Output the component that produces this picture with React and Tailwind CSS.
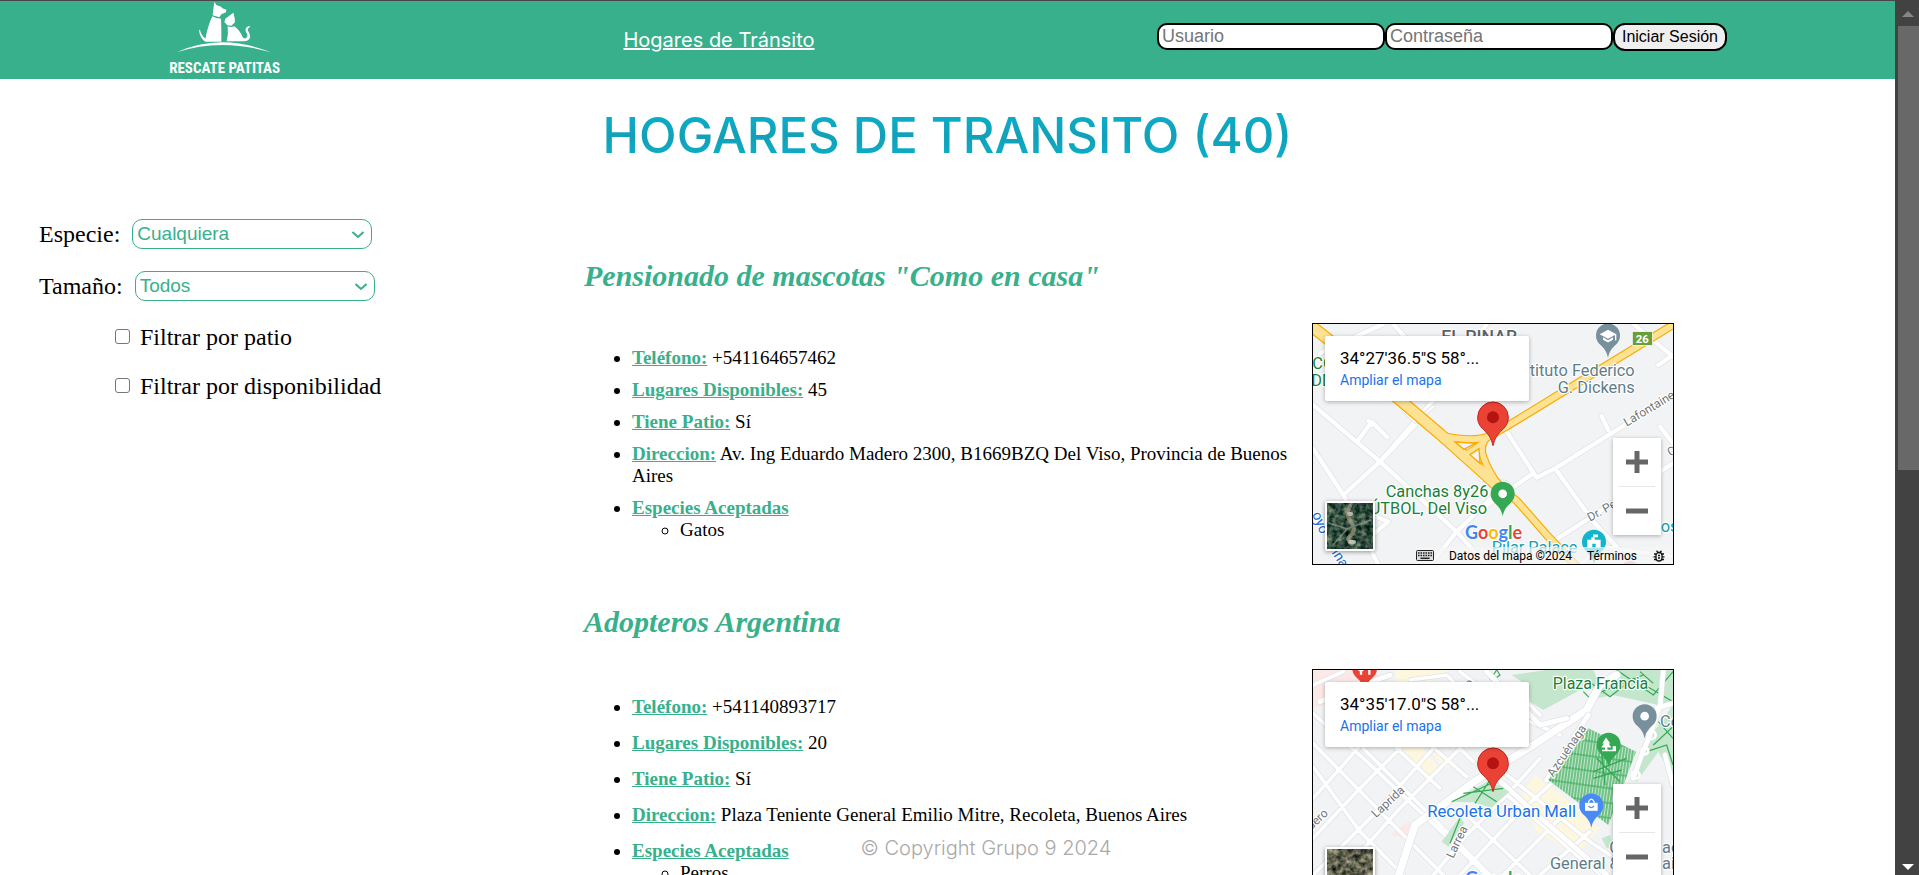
import React from "react";

const serif = "font-['Liberation_Serif',serif]";
const sans = "font-['Liberation_Sans',sans-serif]";
const inter = "font-['Inter',sans-serif]";

function Logo() {
  return (
    <svg viewBox="24 3 339 234" className="h-[78px] w-[113px] shrink-0" role="img" aria-label="Rescate Patitas">
      <g fill="#fff">
        <path d="M163 5l6 10 14 5 4 5 12 4-1 8-14 6-6 9-20-6 2-18z" />
        <path d="M157 49q12 7 26 7l1 32v37h-48q-16-9-19-34l3-2q2 14 16 27 8-40 21-67z" />
        <path d="M220 38l4 17 1 12-11 10-12-1-9-10 3-10 11-8z" />
        <path d="M203 79q10 4 20 0 17 12 25 33 4 4 9 3 9-5 3-15-10-16 8-23l2 4q-11 6-4 15 9 16-1 24-5 4-13 4h-52q6-22 3-45z" />
        <path d="M50 157Q182 97 333 157 184 113 50 157z" />
      </g>
      <text x="194" y="218" textAnchor="middle" fill="#fff" fontSize="45" fontWeight="700" fontFamily="'Liberation Sans Narrow', 'Roboto Condensed', 'Roboto', sans-serif">
        RESCATE PATITAS
      </text>
    </svg>
  );
}

function Header() {
  return (
    <header className="flex h-[79px] items-center justify-between border-t border-[#474747] bg-[#38b08c] px-[168px]">
      <Logo />
      <nav>
        <a href="#hogares" className={`${inter} text-[20px] leading-6 text-white underline`}>
          Hogares de Tránsito
        </a>
      </nav>
      <form className={`${sans} flex items-start pb-1.5`} onSubmit={(e) => e.preventDefault()}>
        <input
          type="text"
          aria-label="Usuario"
          placeholder="Usuario"
          className="h-[27px] w-[228px] rounded-[10px] border-2 border-black bg-white px-[3px] text-[18px] placeholder:text-[#757575]"
        />
        <input
          type="password"
          aria-label="Contraseña"
          placeholder="Contraseña"
          className="h-[27px] w-[228px] rounded-[10px] border-2 border-black bg-white px-[3px] text-[18px] placeholder:text-[#757575]"
        />
        <button type="submit" className="h-[28px] w-[114px] rounded-[12px] border-2 border-black bg-[#efefef] text-[16px] leading-6 text-black">
          Iniciar Sesión
        </button>
      </form>
    </header>
  );
}

function SelectField({ id, label, options }) {
  return (
    <div className="flex h-[30px] items-center gap-3">
      <label htmlFor={id} className="text-[24px]">{label}</label>
      <span className="relative flex">
        <select
          id={id}
          className={`${sans} h-[30px] w-[240px] appearance-none rounded-[10px] border border-[#38b08c] bg-white pl-1 text-[19px] text-[#38b08c]`}
        >
          {options.map((o) => (
            <option key={o}>{o}</option>
          ))}
        </select>
        <svg viewBox="0 0 12 8" className="pointer-events-none absolute top-3 right-2 h-2 w-3">
          <path d="M0.500 1l5.500 5 5.500-5" fill="none" stroke="#38b08c" strokeWidth="2" />
        </svg>
      </span>
    </div>
  );
}

function CheckField({ id, label }) {
  return (
    <div className="flex h-[27px] items-center gap-2.5 pl-[76px]">
      <input
        id={id}
        type="checkbox"
        className="size-[15px] appearance-none rounded-[3px] border border-[#767676] bg-white checked:bg-[#38b08c]"
      />
      <label htmlFor={id} className="text-[24px]">{label}</label>
    </div>
  );
}

function Filters() {
  return (
    <aside className={`${serif} flex w-[584px] shrink-0 flex-col gap-[22px] pt-[53px] pl-[39px] text-black`}>
      <SelectField id="especie" label="Especie:" options={["Cualquiera", "Perros", "Gatos"]} />
      <SelectField id="tamano" label="Tamaño:" options={["Todos", "Chico", "Mediano", "Grande"]} />
      <CheckField id="patio" label="Filtrar por patio" />
      <CheckField id="disponibilidad" label="Filtrar por disponibilidad" />
    </aside>
  );
}

function Pin({ x, y, r, fill, stroke = "none", children }) {
  const h = r * 2.85;
  return (
    <g transform={`translate(${x} ${y})`}>
      <path
        d={`M0 0C${-r * 0.12} ${-h * 0.18} ${-r * 0.3} ${-h * 0.26} ${-r * 0.6} ${-h * 0.36}C${-r * 0.9} ${-h * 0.46} ${-r} ${-h * 0.54} ${-r} ${-h + r}A${r} ${r} 0 0 1 ${r} ${-h + r}C${r} ${-h * 0.54} ${r * 0.9} ${-h * 0.46} ${r * 0.6} ${-h * 0.36}C${r * 0.3} ${-h * 0.26} ${r * 0.12} ${-h * 0.18} 0 0Z`}
        fill={fill}
        stroke={stroke}
        strokeWidth="3"
      />
      <g transform={`translate(0 ${-h + r})`}>{children}</g>
    </g>
  );
}

function Place({ x, y, fill, anchor = "start", size = 49, rotate = 0, children, weight = 400 }) {
  return (
    <text
      transform={`translate(${x} ${y}) rotate(${rotate})`}
      fill={fill}
      fontSize={size}
      fontWeight={weight}
      textAnchor={anchor}
      stroke="#fff"
      strokeWidth="7"
      strokeLinejoin="round"
      paintOrder="stroke"
    >
      {children}
    </text>
  );
}

function Streets({ d, width = 13, edge = "#dfe1e5" }) {
  return (
    <g fill="none" strokeLinecap="round" strokeLinejoin="round">
      <path d={d} stroke={edge} strokeWidth={width + 4} />
      <path d={d} stroke="#fff" strokeWidth={width} />
    </g>
  );
}

function MapDelViso() {
  const highway = "M30 45L100 100 300 270 420 372 530 470 600 535";
  const highwaySouth = "M590 525L650 572 745 680 840 780";
  const route = "M1140 32L880 190 622 348 570 378Q520 398 430 378";
  const ramp = "M575 372Q535 395 550 440 565 485 600 530";
  const ramp2 = "M495 435Q525 415 552 395";
  const all = [highwaySouth, route];
  return (
    <svg viewBox="39 42 1080 720" className="block size-full" fontFamily="Roboto, sans-serif" aria-hidden="true">
      <rect x="39" y="42" width="1080" height="720" fill="#f1f3f4" />
      <Streets d="M39 285L240 455 470 665 560 765M39 415L130 555 235 765M130 555L240 455 345 345M240 455L410 260 560 42M470 665L620 520 540 505M470 665L390 765M280 42L340 110M60 130L250 42M1000 42L1119 140M1075 165L1119 135M905 318L925 360M620 365L710 503 765 475 1119 255M765 475L880 635 950 710M700 490L540 600M1080 350L1119 400M750 700L860 630 1119 460M180 600L265 635 200 690M175 390L215 335 262 382M205 332L215 345M840 765L900 710 1119 740" />
      <Streets d="M310 300L345 335 400 290" width={8} />
      <g fill="none" strokeLinejoin="round">
        <path d={highway} stroke="#f9ab00" strokeWidth="37" />
        {all.map((d) => <path key={d} d={d} stroke="#f9ab00" strokeWidth="25" />)}
        <path d={ramp} stroke="#f9ab00" strokeWidth="24" />
        <path d={ramp2} stroke="#f9ab00" strokeWidth="20" />
        <path d={highway} stroke="#fde293" strokeWidth="30" />
        {all.map((d) => <path key={d} d={d} stroke="#fde293" strokeWidth="18" />)}
        <path d={ramp} stroke="#fde293" strokeWidth="17" />
        <path d={ramp2} stroke="#fde293" strokeWidth="14" />
      </g>
      <g fill="#f1f3f4" stroke="#f9ab00" strokeWidth="4">
        <path d="M465 396L526 400 492 418Z" />
        <path d="M510 434L537 416 540 460Z" />
      </g>
      <Place x={424} y={98} fill="#5f6368" weight={500} size={53}>EL PINAR</Place>
      <Place x={37} y={178} fill="#188038">CC</Place>
      <Place x={34} y={228} fill="#188038">DE</Place>
      <Place x={1004} y={198} fill="#607d8b" anchor="end">Instituto Federico</Place>
      <Place x={1004} y={248} fill="#607d8b" anchor="end">G. Dickens</Place>
      <Place x={980} y={350} fill="#70757a" size={36} rotate={-31}>Lafontaine</Place>
      <Place x={870} y={635} fill="#70757a" size={36} rotate={-29}>Dr. Pe</Place>
      <Place x={1112} y={440} fill="#70757a" size={36} rotate={-35}>C</Place>
      <Place x={565} y={560} fill="#188038" anchor="end">Canchas 8y26</Place>
      <Place x={561} y={611} fill="#188038" anchor="end">FÚTBOL, Del Viso</Place>
      <Place x={36} y={612} fill="#1967d2" size={42} rotate={68}>oyo</Place>
      <Place x={80} y={705} fill="#1967d2" size={42} rotate={58}>Pina</Place>
      <Place x={575} y={730} fill="#129eaf">Pilar Palace</Place>
      <Place x={1082} y={665} fill="#129eaf">os</Place>
      <rect x="997" y="65" width="60" height="41" fill="#689f38" stroke="#fff" strokeWidth="2" />
      <text x="1027" y="98" fill="#fff" fontSize="34" fontWeight="700" textAnchor="middle">26</text>
      <Pin x={924} y={143} r={36} fill="#78909c">
        <path d="M-25 -4L0 -17 25 -4 0 10zM-15 5v8l15 8 15-8V5L0 14z" fill="#fff" />
        <path d="M23 -4v19" stroke="#fff" strokeWidth="4" />
      </Pin>
      <Pin x={608} y={618} r={36} fill="#34a853"><circle r="13" fill="#fff" /></Pin>
      <Pin x={882} y={762} r={36} fill="#12b5cb">
        <path d="M-20 18V-6h12v-8h5v-8h15v8H2v8h18v24H5V6H-5v12z" fill="#fff" />
      </Pin>
      <circle cx="990" cy="780" r="28" fill="#f48fb1" />
      <Pin x={579} y={407} r={46} fill="#ea4335" stroke="#c5221f"><circle r="18" fill="#b31412" /></Pin>
    </svg>
  );
}

function MapRecoleta() {
  return (
    <svg viewBox="39 45 1080 720" className="block size-full" fontFamily="Roboto, sans-serif" aria-hidden="true">
      <defs>
        <pattern id="plots" width="9" height="44" patternUnits="userSpaceOnUse" patternTransform="rotate(8)">
          <path d="M3 0v44M0 3h9" stroke="#34a853" strokeWidth="3.5" />
        </pattern>
      </defs>
      <rect x="39" y="45" width="1080" height="720" fill="#f1f3f4" />
      <path d="M39 45H215L270 90 150 110 60 155H39Z" fill="#fce8e6" />
      <path d="M270 540L325 500 345 520 320 550Z" fill="#fce8e6" />
      <g fill="#fef7e0">
        <path d="M285 45H445L365 95 290 90Z" />
        <path d="M290 285L355 265 425 345 385 375Z" />
        <path d="M395 290L462 312 435 345Z" />
        <path d="M665 415L705 360 760 400 900 520 830 600 710 530Z" />
      </g>
      <g fill="#c3e6cd">
        <path d="M635 60L760 42 880 45 900 90 850 100 730 165 690 140 680 90Z" />
        <path d="M950 45H1119V140L1075 150 940 120 890 130 870 90 960 70Z" />
        <path d="M1040 260L1119 150V370L1075 290 1010 380 1000 370Z" />
        <path d="M905 550L930 540 940 580 920 580Z" />
      </g>
      <path
        d="M860 75L930 125 1000 70 1119 140M950 45L1060 120 1119 50M880 120L1030 60M1020 50L1060 85M1060 270L1119 215M1040 290L1100 270 1119 330M1075 200L1119 250M570 75L590 45 600 60 575 78M850 110L880 140"
        stroke="#34a853" strokeWidth="3.5" fill="none"
      />
      <Streets d="M39 265L330 560 430 660M39 175L190 310 430 535 560 660M39 335L180 530 310 660M190 280L500 590 570 660M290 280L420 400M500 480L690 660M380 260L500 365M480 280L520 320M575 380L830 600 905 660M615 355L870 560 930 600M39 550L180 400 300 280M39 660L230 470 400 280M120 660L300 460 480 280M39 430L130 330 180 270M400 660L500 540 620 420 720 310M480 660L640 490 760 380M610 660L800 470M720 660L870 530M330 75L440 60 470 90M480 50L600 140M640 100L720 180M690 200L780 240M39 90L130 50" width={11} />
      <Streets d="M290 680L345 510 530 375 700 270 860 165 900 90 950 60" width={22} />
      <Streets d="M570 350L700 470 920 660M740 375L865 180M60 140L270 60M560 50L720 210 800 190" width={15} />
      <g fill="#c3e6cd">
        <path d="M455 440L570 375 628 410 575 458 520 442Z" />
        <path d="M480 485L492 505 445 575 425 560Z" />
        <path d="M865 220L1008 290 925 510 745 375Z" />
      </g>
      <path d="M490 415L610 400M455 440L575 385M525 445L570 375M520 395L590 440M480 490L450 565" stroke="#34a853" strokeWidth="3.5" />
      <path d="M865 220L1008 290 925 510 745 375Z" fill="url(#plots)" />
      <path d="M880 350L980 310M890 310L960 380M905 290L915 390M880 370L965 345" stroke="#34a853" strokeWidth="4" />
      <Streets d="M1090 45L1080 155 1050 240 1025 300 1000 370M1119 145L1070 160M1095 300L1119 390" width={14} />
      <g fill="none" stroke="#fff" strokeWidth="8">
        <circle cx="1055" cy="240" r="12" />
        <circle cx="1035" cy="288" r="10" />
        <circle cx="1008" cy="360" r="11" />
      </g>
      <Place x={758} y={101} fill="#188038" size={48}>Plaza Francia</Place>
      <Place x={1080} y={217} fill="#607d8b">Ce</Place>
      <Place x={760} y={368} fill="#70757a" size={36} rotate={-56}>Azcuénaga</Place>
      <Place x={228} y={490} fill="#70757a" size={36} rotate={-43}>Laprida</Place>
      <Place x={34} y={526} fill="#70757a" size={36} rotate={-43}>uero</Place>
      <Place x={460} y={612} fill="#70757a" size={36} rotate={-65}>Larrea</Place>
      <Place x={508} y={100} fill="#70757a" size={36} rotate={-45}>o</Place>
      <Place x={828} y={485} fill="#1a73e8" anchor="end" size={50}>Recoleta Urban Mall</Place>
      <Place x={928} y={595} fill="#607d8b">C</Place>
      <Place x={1086} y={595} fill="#607d8b">ac</Place>
      <Place x={750} y={641} fill="#607d8b">General &amp;</Place>
      <Place x={1086} y={641} fill="#607d8b">ai</Place>
      <Pin x={194} y={108} r={37} fill="#ea4335">
        <path d="M-16 -12v20M-6 -12v20M14 -12v32M-11 0v20M-16 6h10" stroke="#fff" strokeWidth="7" />
      </Pin>
      <Pin x={1034} y={250} r={36} fill="#78909c"><circle r="13" fill="#fff" /></Pin>
      <Pin x={926} y={336} r={36} fill="#34a853">
        <path d="M-8 -22L5 -4H0L8 8H-4V15H22V19H-20V15H-11V8H-22L-14 -4H-19ZM12 4h10v11H12z" fill="#fff" />
      </Pin>
      <Pin x={874} y={518} r={36} fill="#4a8af4">
        <path d="M-19 -8H19V16H-19Z" fill="#fff" />
        <path d="M-8 -8v-4q8-14 16 0v4" stroke="#fff" strokeWidth="4" fill="none" />
        <path d="M-8 1q8 11 16 0" stroke="#4a8af4" strokeWidth="4" fill="none" />
      </Pin>
      <Pin x={579} y={410} r={46} fill="#ea4335" stroke="#c5221f"><circle r="18" fill="#b31412" /></Pin>
    </svg>
  );
}

function Satellite({ earthy }) {
  return (
    <svg viewBox="0 0 46 46" className="block size-full" aria-hidden="true">
      <defs>
        <filter id={earthy ? "soilB" : "soilA"} x="0" y="0" width="100%" height="100%" colorInterpolationFilters="sRGB">
          <feTurbulence type="fractalNoise" baseFrequency="0.18" numOctaves="3" seed={earthy ? 8 : 3} />
          <feColorMatrix
            values={earthy
              ? "1 0 0 0 -0.12  0.9 0.1 0 0 -0.12  0.8 0 0.1 0 -0.14  0 0 0 0 1"
              : "0.9 0 0 0 -0.26  0.8 0.1 0 0 -0.15  0.7 0 0.1 0 -0.16  0 0 0 0 1"}
          />
        </filter>
      </defs>
      <rect width="46" height="46" filter={earthy ? "url(#soilB)" : "url(#soilA)"} />
      {!earthy && (
        <g fill="none" strokeLinecap="round" opacity="0.7">
          <path d="M23 3q-5 9 1 16 6 8-1 14-4 4 2 8" stroke="#a89c80" strokeWidth="4" />
          <path d="M2 20l18 6 24-9M6 42l14-16" stroke="#8f988c" strokeWidth="1.500" />
          <path d="M22 11h2M23 39h4" stroke="#ece8da" strokeWidth="4" />
        </g>
      )}
    </svg>
  );
}

function GoogleMark() {
  const letters = [["G", "text-[#4285f4]"], ["o", "text-[#ea4335]"], ["o", "text-[#fbbc04]"], ["g", "text-[#4285f4]"], ["l", "text-[#34a853]"], ["e", "text-[#ea4335]"]];
  return (
    <span className="absolute bottom-5 left-[152px] font-['Lato',sans-serif] text-[18px] leading-6 font-bold [paint-order:stroke] [-webkit-text-stroke:2px_white]">
      {letters.map(([c, cls], i) => (
        <span key={i} className={cls}>{c}</span>
      ))}
    </span>
  );
}

function MapEmbed({ coords, second }) {
  return (
    <div className="relative h-[242px] w-[362px] shrink-0 overflow-hidden border border-black font-['Roboto',sans-serif]">
      {second ? <MapRecoleta /> : <MapDelViso />}
      <GoogleMark />
      <div className="absolute top-3 left-3 h-[65px] w-[204px] rounded-xs bg-white px-[15px] pt-3 shadow-[0_1px_4px_rgba(0,0,0,0.3)]">
        <p className="text-[17px] leading-5 text-black">{coords}</p>
        <a href="#mapa" className="block pt-0.5 text-[14px] leading-5 text-[#1a73e8]">Ampliar el mapa</a>
      </div>
      <button type="button" aria-label="Mostrar imágenes satelitales" className="absolute bottom-[13px] left-3 size-[50px] rounded-xs border-2 border-white shadow-[0_1px_4px_rgba(0,0,0,0.4)]">
        <Satellite earthy={second} />
      </button>
      <div className="absolute top-[114px] right-3 flex h-[97px] w-12 flex-col items-center bg-white shadow-[0_1px_4px_rgba(0,0,0,0.3)]">
        <button type="button" aria-label="Acercar" className="flex w-full flex-1 items-center justify-center">
          <svg viewBox="0 0 22 22" className="size-[22px]"><path d="M11 0v22M0 11h22" stroke="#666" strokeWidth="5" /></svg>
        </button>
        <span className="h-px w-9 bg-[#e6e6e6]" />
        <button type="button" aria-label="Alejar" className="flex w-full flex-1 items-center justify-center">
          <svg viewBox="0 0 22 22" className="size-[22px]"><path d="M0 11h22" stroke="#666" strokeWidth="5" /></svg>
        </button>
      </div>
      <div className="absolute right-0 bottom-0 flex h-[17px] items-center bg-[#f5f5f5]/70 pr-2 text-[12px] leading-4 text-black">
        <svg viewBox="0 0 18 11" className="mr-[15px] h-[11px] w-[18px]">
          <rect x="0.5" y="0.5" width="17" height="10" rx="1" fill="#ddd" stroke="#222" />
          <path d="M2 3h14M2 5.500h14" stroke="#222" strokeWidth="1.600" strokeDasharray="1.600 0.900" />
          <path d="M4.500 8.300h9" stroke="#222" strokeWidth="1.500" />
        </svg>
        <span>Datos del mapa ©2024</span>
        <a href="#terminos" className="ml-[15px]">Términos</a>
        <svg viewBox="0 0 12 12" className="ml-4 size-3" fill="none" stroke="#111" strokeWidth="1.300">
          <rect x="3" y="2.500" width="6" height="8.500" rx="3" />
          <path d="M1 4h2M9 4h2M0.500 6.800h2.500M9 6.800h2.500M1 9.500h2M9 9.500h2M3.500 0.800l1.500 1.500M8.500 0.800L7 2.300M5 5.500h2M5 8h2" />
        </svg>
      </div>
    </div>
  );
}

function Term({ children }) {
  return <b className="text-[#38b08c] underline">{children}</b>;
}

function Home({ home, second }) {
  return (
    <article>
      <h2 className="text-[30px] leading-[34px] font-bold text-[#38b08c] italic">{home.name}</h2>
      <div className="mt-[30px] flex">
        <ul className={`flex flex-1 list-disc flex-col pl-12 text-[19px] leading-[22px] text-black ${second ? "gap-[14px] pt-[27px]" : "gap-[10px] pt-6"}`}>
          <li><Term>Teléfono:</Term> {home.phone}</li>
          <li><Term>Lugares Disponibles:</Term> {home.places}</li>
          <li><Term>Tiene Patio:</Term> {home.yard}</li>
          <li><Term>Direccion:</Term> {home.address}</li>
          <li>
            <Term>Especies Aceptadas</Term>
            <ul className="list-[circle] pl-12">
              {home.species.map((s) => <li key={s}>{s}</li>)}
            </ul>
          </li>
        </ul>
        <MapEmbed coords={home.coords} second={second} />
      </div>
    </article>
  );
}

const homes = [
  {
    name: 'Pensionado de mascotas "Como en casa"',
    phone: "+541164657462",
    places: 45,
    yard: "Sí",
    address: "Av. Ing Eduardo Madero 2300, B1669BZQ Del Viso, Provincia de Buenos Aires",
    species: ["Gatos"],
    coords: "34°27'36.5\"S 58°...",
  },
  {
    name: "Adopteros Argentina",
    phone: "+541140893717",
    places: 20,
    yard: "Sí",
    address: "Plaza Teniente General Emilio Mitre, Recoleta, Buenos Aires",
    species: ["Perros"],
    coords: "34°35'17.0\"S 58°...",
  },
];

function ScrollRail() {
  return (
    <div className="flex w-6 shrink-0 flex-col items-center justify-between bg-[#424242] pt-[11px] pb-[5px] pl-0.5" aria-hidden="true">
      <div className="flex w-full flex-1 flex-col items-center">
        <svg viewBox="0 0 12 6" className="h-1.5 w-3"><path d="M0 6L6 0l6 6z" fill="#868686" /></svg>
        <div className="mt-[9px] h-[52%] w-[21px] bg-[#686868]" />
      </div>
      <svg viewBox="0 0 12 6" className="h-1.5 w-3"><path d="M0 0h12L6 6z" fill="#fff" /></svg>
    </div>
  );
}

export default function App() {
  return (
    <div className="flex h-screen overflow-hidden bg-white">
      <div className="relative min-w-0 flex-1 overflow-hidden">
        <Header />
        <h1 className={`${inter} mt-[27px] bg-linear-to-b from-[#04b4d0] via-[#12a0b8] to-[#04b4d0] bg-clip-text text-center text-[49px] leading-[60px] font-medium text-transparent`}>
          HOGARES DE TRANSITO (40)
        </h1>
        <main className="flex">
          <Filters />
          <section className={`${serif} flex flex-1 flex-col gap-10 pt-[93px] pr-[221px]`}>
            {homes.map((h, i) => <Home key={h.name} home={h} second={i === 1} />)}
          </section>
        </main>
        <footer className={`${inter} pointer-events-none absolute inset-x-0 bottom-[15px] pl-[77px] text-center text-[20px] leading-6 font-light text-[#a9a9a9]`}>
          © Copyright Grupo 9 2024
        </footer>
      </div>
      <ScrollRail />
    </div>
  );
}
